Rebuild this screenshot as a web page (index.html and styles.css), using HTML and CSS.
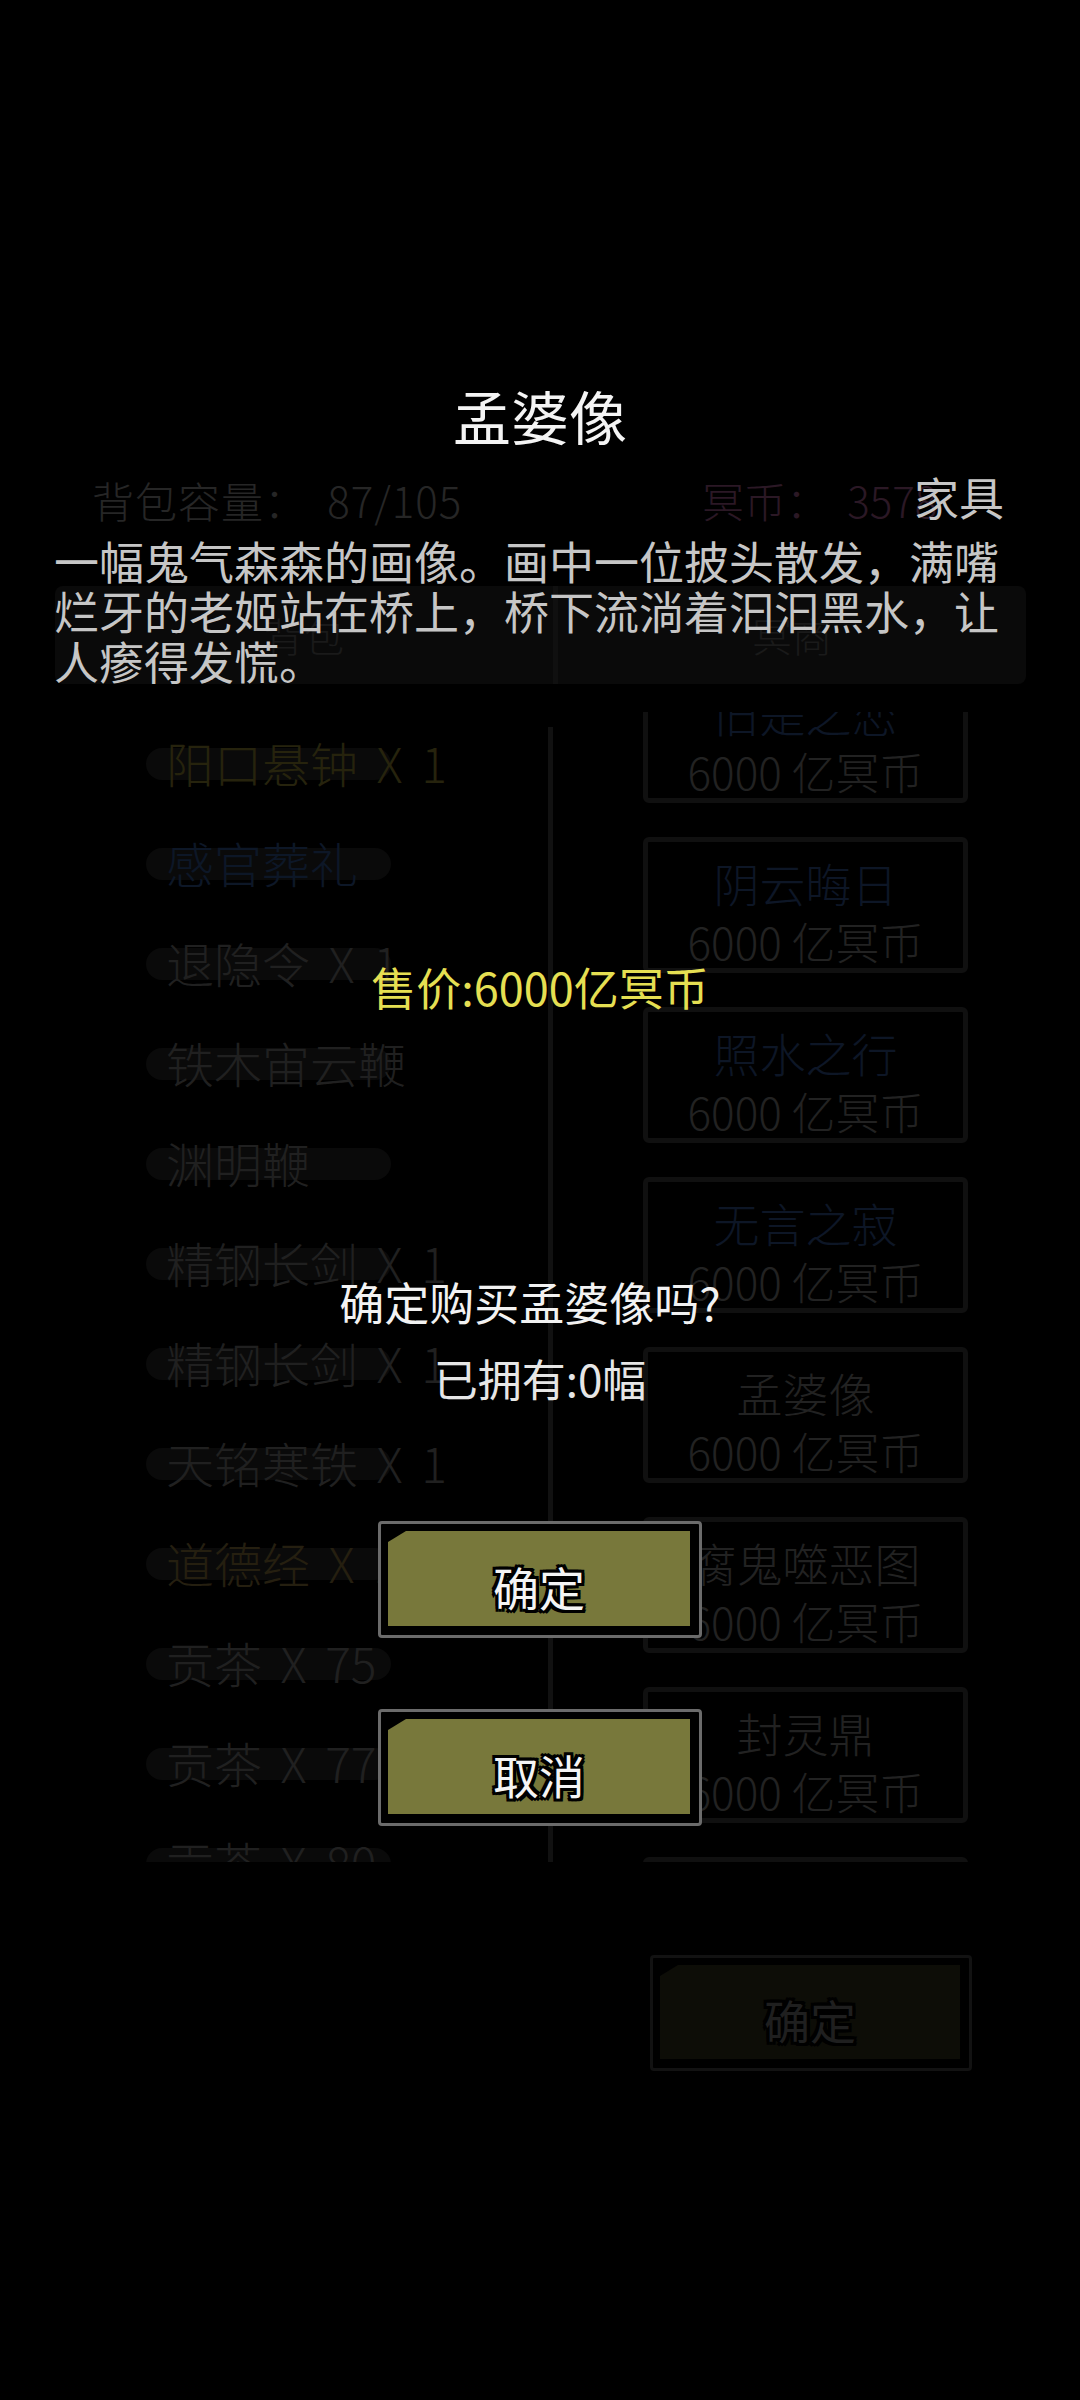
FILE: index.html
```html
<!DOCTYPE html>
<html lang="zh-CN">
<head>
<meta charset="utf-8">
<title>孟婆像</title>
<link rel="stylesheet" href="styles.css">
</head>
<body>
<div class="screen">
  <div class="bg">
    <div class="stats">
      <span class="cap">背包容量： 87/105</span>
      <span class="coin">冥币： 3578</span>
    </div>
    <div class="tabs">
      <div class="tab tab-left">背包</div>
      <div class="tab-div"></div>
      <div class="tab">冥商</div>
    </div>
    <div class="content">
      <div class="list">
        <div class="item gold"><span class="t">阳口悬钟 X 1</span></div>
        <div class="item blue"><span class="t">感官葬礼</span></div>
        <div class="item"><span class="t">退隐令 X 1</span></div>
        <div class="item"><span class="t">铁木宙云鞭</span></div>
        <div class="item"><span class="t">渊明鞭</span></div>
        <div class="item"><span class="t">精钢长剑 X 1</span></div>
        <div class="item"><span class="t">精钢长剑 X 1</span></div>
        <div class="item"><span class="t">天铭寒铁 X 1</span></div>
        <div class="item brown"><span class="t">道德经 X 1</span></div>
        <div class="item"><span class="t">贡茶 X 75</span></div>
        <div class="item"><span class="t">贡茶 X 77</span></div>
        <div class="item"><span class="t">贡茶 X 80</span></div>
      </div>
      <div class="vline"></div>
      <div class="shop">
        <div class="card"><div class="name blue">旧是之恋</div><div class="price">6000 亿冥币</div></div>
        <div class="card"><div class="name blue">阴云晦日</div><div class="price">6000 亿冥币</div></div>
        <div class="card"><div class="name blue">照水之行</div><div class="price">6000 亿冥币</div></div>
        <div class="card"><div class="name blue">无言之寂</div><div class="price">6000 亿冥币</div></div>
        <div class="card"><div class="name">孟婆像</div><div class="price">6000 亿冥币</div></div>
        <div class="card"><div class="name">腐鬼噬恶图</div><div class="price">6000 亿冥币</div></div>
        <div class="card"><div class="name">封灵鼎</div><div class="price">6000 亿冥币</div></div>
        <div class="card"><div class="name">镇魂铃</div><div class="price">6000 亿冥币</div></div>
      </div>
    </div>
    <div class="bottom">
      <div class="btn dim"><div class="btn-fill">确定</div></div>
    </div>
  </div>

  <div class="modal">
    <div class="title">孟婆像</div>
    <div class="type">家具</div>
    <div class="desc">一幅鬼气森森的画像。画中一位披头散发，满嘴烂牙的老姬站在桥上，桥下流淌着汩汩黑水，让人瘆得发慌。</div>
    <div class="sell">售价:6000亿冥币</div>
    <div class="ask">确定购买孟婆像吗?</div>
    <div class="owned">已拥有:0幅</div>
    <div class="btn confirm"><div class="btn-fill">确定</div></div>
    <div class="btn cancel"><div class="btn-fill">取消</div></div>
  </div>
</div>
</body>
</html>
```

FILE: styles.css
```css
html, body {
  margin: 0;
  padding: 0;
  background: #000;
}

.screen {
  position: relative;
  width: 1080px;
  height: 2400px;
  background: #000;
  overflow: hidden;
  font-family: "Noto Sans CJK SC", "Noto Sans", sans-serif;
}

/* ---------- dimmed background page ---------- */
.bg {
  padding-top: 475px;
  font-weight: 300;
}

.stats {
  display: flex;
  padding-left: 92px;
  font-size: 42px;
  line-height: 50px;
  white-space: pre;
}

.cap {
  width: 610px;
  color: #262626;
  word-spacing: 10px;
  letter-spacing: 1px;
}

.coin {
  color: #2b1825;
  word-spacing: 10px;
}

.tabs {
  margin: 61px 54px 0 55px;
  height: 98px;
  background: #0a0a0a;
  border-radius: 8px;
  display: flex;
}

.tab {
  flex: 1;
  display: flex;
  align-items: center;
  justify-content: center;
  font-size: 40px;
  color: #1a1a1a;
}

.tab-left {
  flex: none;
  width: 498px;
}

.tab-div {
  width: 5px;
  background: #101010;
}

.content {
  margin-top: 28px;
  height: 1150px;
  overflow: hidden;
  display: flex;
}

.list {
  width: 548px;
  box-sizing: border-box;
  padding-left: 146px;
  flex: none;
}

.item {
  position: relative;
  height: 100px;
  display: flex;
  align-items: center;
  padding-left: 20px;
  font-size: 48px;
  color: #202020;
  white-space: pre;
  word-spacing: 8px;
}

.item::before {
  content: "";
  position: absolute;
  left: 0;
  top: 36px;
  width: 245px;
  height: 32px;
  border-radius: 16px;
  background: #0a0a0a;
}

.item .t {
  position: relative;
}

.item.gold { color: #26230d; }
.item.blue { color: #0d1727; }
.item.brown { color: #251f10; }

.vline {
  flex: none;
  width: 5px;
  margin-top: 15px;
  background: #111;
}

.shop {
  flex: none;
  margin-left: 90px;
  width: 325px;
  display: flex;
  flex-direction: column;
  gap: 34px;
}

.card {
  flex: none;
  height: 136px;
  box-sizing: border-box;
  border: 5px solid #101010;
  border-radius: 6px;
  display: flex;
  flex-direction: column;
  align-items: center;
  padding-top: 12px;
}

.card:first-child {
  margin-top: -45px;
}

.card .name {
  font-size: 46px;
  line-height: 56px;
  color: #222;
}

.card .name.blue {
  color: #0d1626;
}

.card .price {
  font-size: 44px;
  line-height: 56px;
  margin-top: 3px;
  color: #222;
}

.bottom {
  margin-top: 93px;
  padding-left: 650px;
}

/* ---------- buttons ---------- */
.btn {
  width: 324px;
  height: 117px;
  box-sizing: border-box;
  border: 3px solid #6b6b6b;
  border-radius: 4px;
  padding: 7px 9px 9px 7px;
  background: #000;
}

.btn-fill {
  height: 100%;
  box-sizing: border-box;
  background: #78783b;
  clip-path: polygon(0 11px, 18px 0, 100% 0, 100% 100%, 0 100%);
  display: flex;
  align-items: center;
  justify-content: center;
  padding-top: 14px;
  font-size: 46px;
  line-height: 50px;
  font-weight: 400;
  color: #f4f4f4;
  text-shadow:
    -3px -3px 0 #000, 3px -3px 0 #000, -3px 3px 0 #000, 3px 3px 0 #000,
    0 3px 0 #000, 0 -3px 0 #000, 3px 0 0 #000, -3px 0 0 #000;
}

.btn.dim {
  width: 322px;
  height: 116px;
  border-color: #121212;
}

.btn.dim .btn-fill {
  background: #0d0d07;
  color: #1f1f1f;
}

/* ---------- modal ---------- */
.modal {
  position: absolute;
  left: 0;
  top: 0;
  width: 1080px;
  height: 2400px;
  display: flex;
  flex-direction: column;
  align-items: center;
}

.title {
  margin-top: 380px;
  font-size: 58px;
  line-height: 70px;
  color: #f4f4f4;
}

.type {
  width: 950px;
  margin-top: 22px;
  margin-right: 22px;
  text-align: right;
  font-size: 45px;
  line-height: 50px;
  color: #c6c6c6;
}

.desc {
  width: 950px;
  margin-top: 14px;
  margin-right: 22px;
  font-size: 45px;
  line-height: 50px;
  color: #c6c6c6;
}

.sell {
  margin-top: 276px;
  font-size: 45px;
  line-height: 50px;
  color: #e5df52;
}

.ask {
  margin-top: 265px;
  margin-right: 20px;
  font-size: 45px;
  line-height: 50px;
  color: #f2f2f2;
}

.owned {
  margin-top: 26px;
  font-size: 44px;
  line-height: 50px;
  color: #e6e6e6;
}

.btn.confirm {
  margin-top: 118px;
}

.btn.cancel {
  margin-top: 71px;
}
```
